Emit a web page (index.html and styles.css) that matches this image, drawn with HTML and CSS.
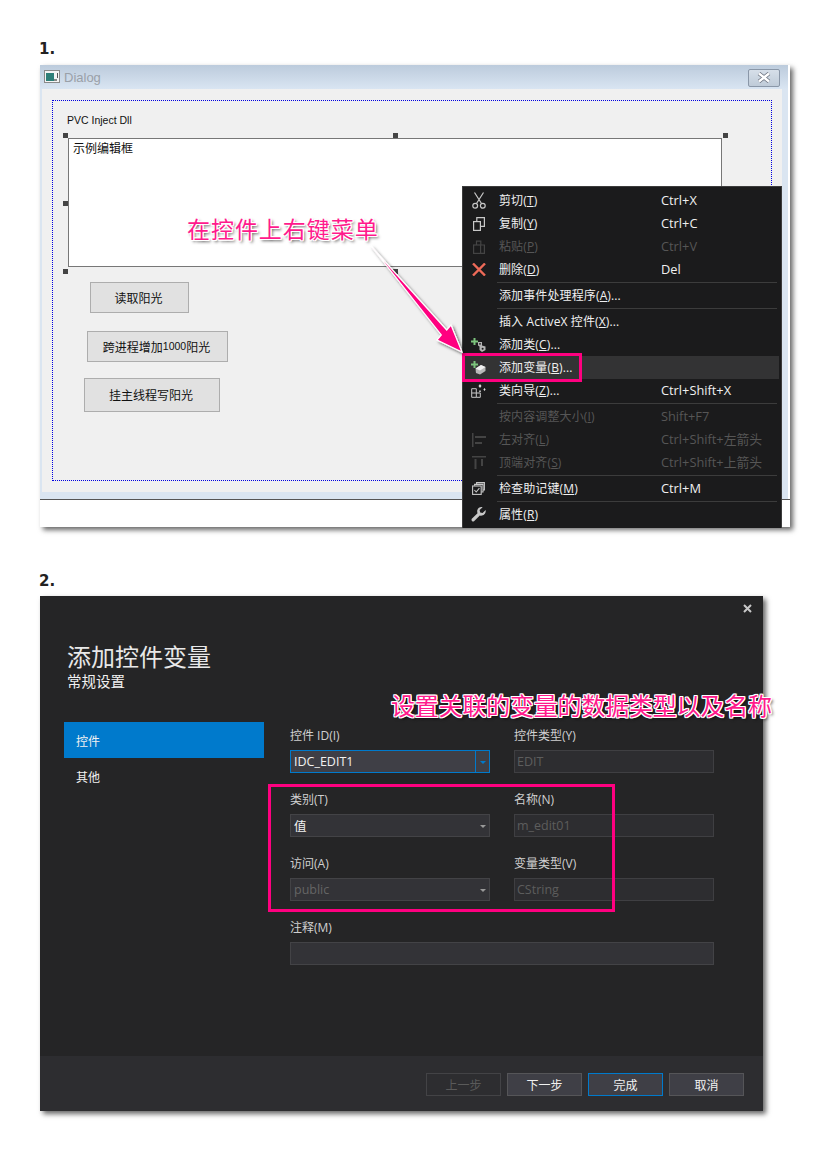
FILE: index.html
```html
<!DOCTYPE html>
<html lang="zh-CN">
<head>
    <meta charset="UTF-8">
    <title>添加控件变量</title>
    <link rel="stylesheet" href="styles.css">
</head>
<body>
    <div class="step-title step-one">1.</div>

    <div class="shot-one">
        <div class="win-title">
            <svg class="win-icon" width="16" height="14" viewBox="0 0 16 14">
                <rect x="0.5" y="0.5" width="15" height="12" fill="#f4f4f4" stroke="#8a8a8a"/>
                <rect x="2" y="3" width="8" height="8" fill="#2f7f78"/>
                <rect x="10" y="9" width="3" height="2" fill="#888"/>
                <rect x="13" y="3" width="1" height="5" fill="#555"/>
            </svg>
            <span class="win-name">Dialog</span>
            <div class="win-close">
                <svg width="14" height="11" viewBox="0 0 14 11">
                    <path d="M2 1.5 L12 9.5 M12 1.5 L2 9.5" stroke="#6d7480" stroke-width="4" fill="none"/>
                    <path d="M2 1.5 L12 9.5 M12 1.5 L2 9.5" stroke="#fff" stroke-width="2.4" fill="none"/>
                </svg>
            </div>
        </div>
        <div class="win-body">
            <div class="guide"></div>
            <div class="static-label">PVC Inject Dll</div>
            <div class="edit-box">示例编辑框</div>
            <i class="handle h-tl"></i>
            <i class="handle h-tm"></i>
            <i class="handle h-tr"></i>
            <i class="handle h-ml"></i>
            <i class="handle h-bl"></i>
            <i class="handle h-bm"></i>
            <div class="dlg-btn btn-read">读取阳光</div>
            <div class="dlg-btn btn-cross">跨进程增加<span class="small-num">1000</span>阳光</div>
            <div class="dlg-btn btn-hook">挂主线程写阳光</div>
        </div>
        <div class="win-foot"></div>
    </div>

    <div class="ctx-menu">
        <div class="ctx-row">
            <span class="ctx-icon">
                <svg width="14" height="17" viewBox="0 0 14 17" fill="none" stroke="#c8c8c8" stroke-width="1.2">
                    <path d="M2.5 0.5 L9.5 11.5 M11.5 0.5 L4.5 11.5"/>
                    <circle cx="3.2" cy="13.8" r="2.4"/>
                    <circle cx="10.8" cy="13.8" r="2.4"/>
                </svg>
            </span>
            <span class="ctx-text">剪切(<u>T</u>)</span><span class="ctx-key">Ctrl+X</span>
        </div>
        <div class="ctx-row">
            <span class="ctx-icon">
                <svg width="12" height="14" viewBox="0 0 12 14" fill="none" stroke="#c8c8c8" stroke-width="1.2">
                    <rect x="0.6" y="4.6" width="6.8" height="8.8"/>
                    <path d="M3.8 4.5 V0.6 H11.4 V9.4 H7.6"/>
                </svg>
            </span>
            <span class="ctx-text">复制(<u>Y</u>)</span><span class="ctx-key">Ctrl+C</span>
        </div>
        <div class="ctx-row off">
            <span class="ctx-icon">
                <svg width="12" height="14" viewBox="0 0 12 14" fill="none" stroke="#444" stroke-width="1.2">
                    <rect x="0.6" y="5" width="7" height="8.4"/>
                    <path d="M7.6 5 H11.4 V13.4 H7.6 M3.5 5 V1.2 H7.8 V5"/>
                </svg>
            </span>
            <span class="ctx-text">粘贴(<u>P</u>)</span><span class="ctx-key">Ctrl+V</span>
        </div>
        <div class="ctx-row">
            <span class="ctx-icon">
                <svg width="14" height="13" viewBox="0 0 14 13">
                    <path d="M1 0.5 L13 12.5 M13 0.5 L1 12.5" stroke="#ee6a58" stroke-width="2.4" fill="none"/>
                </svg>
            </span>
            <span class="ctx-text">删除(<u>D</u>)</span><span class="ctx-key">Del</span>
        </div>
        <div class="ctx-sep"></div>
        <div class="ctx-row"><span class="ctx-icon"></span><span class="ctx-text">添加事件处理程序(<u>A</u>)...</span></div>
        <div class="ctx-sep"></div>
        <div class="ctx-row"><span class="ctx-icon"></span><span class="ctx-text">插入 ActiveX 控件(<u>X</u>)...</span></div>
        <div class="ctx-row">
            <span class="ctx-icon">
                <svg width="15" height="14" viewBox="0 0 15 14">
                    <path d="M3.5 0 V7 M0 3.5 H7" stroke="#7cc47c" stroke-width="2" fill="none"/>
                    <path d="M7 4 L11 4 L11 7.5 L14.5 8.5 L14.5 12 L11 14 L8.5 12 L8.5 8.5 L7 7.5 Z" fill="#b4b4b4"/>
                    <circle cx="9" cy="5.8" r="0.9" fill="#1b1b1c"/>
                    <circle cx="11.6" cy="10.8" r="1" fill="#1b1b1c"/>
                </svg>
            </span>
            <span class="ctx-text">添加类(<u>C</u>)...</span>
        </div>
        <div class="ctx-row picked">
            <span class="ctx-icon">
                <svg width="15" height="14" viewBox="0 0 15 14">
                    <path d="M3.5 0 V7 M0 3.5 H7" stroke="#7cc47c" stroke-width="2" fill="none"/>
                    <path d="M4.5 7.5 L10 4 L14.5 6 V10 L9 13.5 L5 12 Z" fill="#b8b8b8"/>
                    <path d="M4.5 7.5 L10 4 L14.5 6 L9 9.5 Z" fill="#f0f0f0"/>
                </svg>
            </span>
            <span class="ctx-text">添加变量(<u>B</u>)...</span>
        </div>
        <div class="ctx-row">
            <span class="ctx-icon">
                <svg width="15" height="14" viewBox="0 0 15 14">
                    <path d="M0.7 4.7 H5.3 V13.3 H0.7 Z M0.7 9 H5.3 M5.3 9 H9.3 V13.3 H5.3" stroke="#c8c8c8" fill="none"/>
                    <path d="M9 0 L10.5 2 L9 4 L7.5 2 Z M13.5 4 L14.6 5.5 L13.5 7 L12.4 5.5 Z M9 6 L10 7.3 L9 8.6 L8 7.3 Z" fill="#ddd"/>
                </svg>
            </span>
            <span class="ctx-text">类向导(<u>Z</u>)...</span><span class="ctx-key">Ctrl+Shift+X</span>
        </div>
        <div class="ctx-sep"></div>
        <div class="ctx-row off"><span class="ctx-icon"></span><span class="ctx-text">按内容调整大小(<u>I</u>)</span><span class="ctx-key">Shift+F7</span></div>
        <div class="ctx-row off">
            <span class="ctx-icon">
                <svg width="14" height="14" viewBox="0 0 14 14" fill="#444">
                    <rect x="0" y="0" width="1.5" height="14"/>
                    <rect x="3" y="3" width="11" height="2"/>
                    <rect x="3" y="9" width="7" height="2"/>
                </svg>
            </span>
            <span class="ctx-text">左对齐(<u>L</u>)</span><span class="ctx-key">Ctrl+Shift+左箭头</span>
        </div>
        <div class="ctx-row off">
            <span class="ctx-icon">
                <svg width="14" height="13" viewBox="0 0 14 13" fill="#444">
                    <rect x="0" y="0" width="14" height="1.5"/>
                    <rect x="2.5" y="3" width="2" height="10"/>
                    <rect x="9" y="3" width="2" height="7"/>
                </svg>
            </span>
            <span class="ctx-text">顶端对齐(<u>S</u>)</span><span class="ctx-key">Ctrl+Shift+上箭头</span>
        </div>
        <div class="ctx-sep"></div>
        <div class="ctx-row">
            <span class="ctx-icon">
                <svg width="13" height="13" viewBox="0 0 13 13" fill="none" stroke="#c8c8c8" stroke-width="1.1">
                    <rect x="0.6" y="4" width="8.6" height="8.4"/>
                    <path d="M2.6 3.8 V2.4 H11 V10 H9.4 M4.6 2.2 V0.6 H12.4 V8 H11.2"/>
                    <path d="M2.4 8 L4.2 10 L7.4 6.2"/>
                </svg>
            </span>
            <span class="ctx-text">检查助记键(<u>M</u>)</span><span class="ctx-key">Ctrl+M</span>
        </div>
        <div class="ctx-sep"></div>
        <div class="ctx-row">
            <span class="ctx-icon">
                <svg width="15" height="15" viewBox="0 0 15 15">
                    <path d="M14.6 3 L11.6 6 L9.2 5.4 L8.6 3 L11.6 0.2 C9 -0.6 6 1.4 6.2 4.6 C6.2 5.2 6.3 5.6 6.5 6.2 L0.8 11.8 C-0.2 13 1.6 15.4 3 14.2 L8.8 8.6 C12.2 9.6 15.4 6.6 14.6 3 Z" fill="#c8c8c8"/>
                </svg>
            </span>
            <span class="ctx-text">属性(<u>R</u>)</span>
        </div>
    </div>

    <div class="pick-frame"></div>
    <svg class="note-arrow" width="110" height="140" viewBox="0 0 110 140">
        <defs>
            <filter id="arrow-shadow" x="-20%" y="-20%" width="150%" height="150%">
                <feDropShadow dx="2" dy="2" stdDeviation="1.5" flood-color="#000" flood-opacity="0.55"/>
            </filter>
        </defs>
        <path d="M2 1 L77.7 85 L82 80 L93 107 L68 95 L72.3 90 Z" fill="#ff0080" stroke="#fff" stroke-width="1.2" stroke-linejoin="miter" filter="url(#arrow-shadow)"/>
    </svg>
    <div class="note note-one">在控件上右键菜单</div>

    <div class="step-title step-two">2.</div>

    <div class="shot-two">
        <svg class="vs-close" width="9" height="9" viewBox="0 0 9 9">
            <path d="M1 1 L8 8 M8 1 L1 8" stroke="#c8c8c8" stroke-width="2" fill="none"/>
        </svg>
        <div class="vs-main">
            <h1 class="vs-title">添加控件变量</h1>
            <div class="vs-sub">常规设置</div>
            <div class="vs-cols">
                <div class="vs-side">
                    <div class="vs-tab on">控件</div>
                    <div class="vs-tab">其他</div>
                </div>
                <div class="vs-form">
                    <div class="field">
                        <label>控件 ID(I)</label>
                        <div class="combo focus"><span class="val">IDC_EDIT1</span><span class="drop"><b class="tri blue"></b></span></div>
                    </div>
                    <div class="field">
                        <label>控件类型(Y)</label>
                        <div class="combo dim"><span class="val">EDIT</span></div>
                    </div>
                    <div class="field">
                        <label>类别(T)</label>
                        <div class="combo"><span class="val">值</span><span class="drop"><b class="tri"></b></span></div>
                    </div>
                    <div class="field">
                        <label>名称(N)</label>
                        <div class="combo dim"><span class="val">m_edit01</span></div>
                    </div>
                    <div class="field">
                        <label>访问(A)</label>
                        <div class="combo grey"><span class="val">public</span><span class="drop"><b class="tri"></b></span></div>
                    </div>
                    <div class="field">
                        <label>变量类型(V)</label>
                        <div class="combo dim"><span class="val">CString</span></div>
                    </div>
                    <div class="field wide">
                        <label>注释(M)</label>
                        <div class="combo note-box"></div>
                    </div>
                </div>
            </div>
        </div>
        <div class="vs-foot">
            <div class="vs-btn off">上一步</div>
            <div class="vs-btn">下一步</div>
            <div class="vs-btn main">完成</div>
            <div class="vs-btn">取消</div>
        </div>
        <div class="group-frame"></div>
        <div class="note note-two">设置关联的变量的数据类型以及名称</div>
    </div>
</body>
</html>
```

FILE: styles.css
```css
body {
    margin: 0;
    width: 832px;
    height: 1152px;
    position: relative;
    overflow: hidden;
    background: #fff;
    font-family: "Noto Sans CJK SC", "Open Sans", sans-serif;
}

.step-title {
    position: absolute;
    left: 39px;
    font-family: "DejaVu Sans", sans-serif;
    font-weight: bold;
    font-size: 15px;
    line-height: 18px;
    color: #222;
}
.step-one { top: 40px; }
.step-two { top: 572px; }

/* first screenshot */
.shot-one {
    position: absolute;
    left: 40px;
    top: 65px;
    width: 750px;
    height: 462px;
    box-sizing: border-box;
    display: flex;
    flex-direction: column;
    border-right: 2px solid #fff;
    background: #dae5f1;
    box-shadow: 3px 3px 5px rgba(0, 0, 0, 0.6);
}

.win-title {
    height: 24px;
    display: flex;
    align-items: center;
    padding: 0 8px 0 4px;
    background: linear-gradient(#bccbdc, #d9e5f2);
}
.win-icon { margin-right: 4px; }
.win-name {
    flex: 1;
    font-family: "Liberation Sans", sans-serif;
    font-size: 13px;
    color: #9aa0a8;
}
.win-close {
    width: 30px;
    height: 16px;
    margin-top: 1px;
    display: flex;
    align-items: center;
    justify-content: center;
    border: 1px solid #8a97a8;
    border-radius: 2px;
    background: linear-gradient(#d6dfe9, #bfcbd8);
}

.win-body {
    position: relative;
    height: 403px;
    margin: 0 6px 0 2px;
    background: #f0f0f0;
    border-bottom: 7px solid #dae5f1;
}

.win-foot {
    flex: 1;
    margin-right: -2px;
    border-top: 1px solid #555;
    background: #fff;
}

/* controls sit on the dialog editor's canvas */
.guide {
    position: absolute;
    left: 10px;
    top: 11px;
    width: 718px;
    height: 379px;
    border: 1px dotted #0000e0;
}
.static-label {
    position: absolute;
    left: 25px;
    top: 23px;
    font-family: "Liberation Sans", sans-serif;
    font-size: 10.5px;
    line-height: 16px;
    color: #111;
}
.edit-box {
    position: absolute;
    left: 26px;
    top: 49px;
    width: 648px;
    height: 127px;
    padding-left: 4px;
    border: 1px solid #777;
    background: #fff;
    font-size: 12px;
    line-height: 18px;
    color: #111;
}
.handle {
    position: absolute;
    width: 5px;
    height: 5px;
    background: #444;
}
.h-tl { left: 21px; top: 44px; }
.h-tm { left: 351px; top: 44px; }
.h-tr { left: 681px; top: 44px; }
.h-ml { left: 21px; top: 112px; }
.h-bl { left: 21px; top: 180px; }
.h-bm { left: 351px; top: 180px; }

.dlg-btn {
    position: absolute;
    display: flex;
    align-items: center;
    justify-content: center;
    box-sizing: border-box;
    padding: 0 2px 1px 0;
    border: 1px solid #adadad;
    background: #e1e1e1;
    font-size: 12px;
    color: #111;
}
.btn-read { left: 48px; top: 193px; width: 99px; height: 31px; }
.btn-cross { left: 45px; top: 242px; width: 141px; height: 31px; }
.btn-hook { left: 42px; top: 289px; width: 136px; height: 34px; }
.small-num {
    font-family: "Liberation Sans", sans-serif;
    font-size: 10.5px;
}

/* context menu */
.ctx-menu {
    position: absolute;
    left: 462px;
    top: 186px;
    width: 320px;
    height: 342px;
    box-sizing: border-box;
    padding: 2px 2px 0;
    border: 1px solid #3c3c3c;
    border-bottom: 0;
    background: #1b1b1c;
}
.ctx-row {
    height: 23px;
    display: flex;
    align-items: center;
    font-size: 12px;
    color: #f0f0f0;
}
.ctx-row.off { color: #565656; }
.ctx-row.picked { background: #333334; }
.ctx-icon {
    width: 34px;
    height: 23px;
    flex: none;
    display: flex;
    align-items: center;
    justify-content: center;
    padding-right: 7px;
    box-sizing: border-box;
}
.ctx-text {
    width: 162px;
    flex: none;
    padding-bottom: 2px;
    white-space: nowrap;
    letter-spacing: 0.12px;
    font-family: "Open Sans", "Noto Sans CJK SC", sans-serif;
}
.ctx-key {
    padding-bottom: 2px;
    font-family: "Open Sans", "Noto Sans CJK SC", sans-serif;
    font-size: 12.8px;
    white-space: nowrap;
}
.ctx-sep {
    height: 1px;
    margin: 1px 2px 1px 32px;
    background: #3c3c3c;
}

.pick-frame {
    position: absolute;
    left: 462px;
    top: 353px;
    width: 114px;
    height: 23px;
    border: 3px solid #ff0080;
}

/* annotations */
.note {
    position: absolute;
    white-space: nowrap;
    font-family: "Noto Sans CJK SC", sans-serif;
    color: #ff1a8c;
    text-shadow:
        -1px 0 0 #fff, 1px 0 0 #fff, 0 -1px 0 #fff, 0 1px 0 #fff,
        -1px -1px 0 #fff, 1px -1px 0 #fff, -1px 1px 0 #fff, 1px 1px 0 #fff,
        2px 2px 3px rgba(0, 0, 0, 0.7);
}
.note-one {
    left: 187px;
    top: 213px;
    font-size: 23px;
    line-height: 30px;
    letter-spacing: 0.95px;
}
.note-two {
    left: 351px;
    top: 94px;
    font-size: 24px;
    line-height: 30px;
    letter-spacing: -0.2px;
}
.note-arrow {
    position: absolute;
    left: 369px;
    top: 245px;
    overflow: visible;
}

/* second screenshot */
.shot-two {
    position: absolute;
    left: 40px;
    top: 596px;
    width: 723px;
    height: 515px;
    display: flex;
    flex-direction: column;
    background: #252526;
    box-shadow: 3px 3px 5px rgba(0, 0, 0, 0.6);
}
.vs-close {
    position: absolute;
    right: 11px;
    top: 8px;
}
.vs-main {
    flex: 1;
    padding: 47px 0 0 27px;
    color: #f1f1f1;
}
.vs-title {
    margin: 0;
    font-family: "Liberation Sans", "Noto Sans CJK SC", sans-serif;
    font-size: 24px;
    font-weight: normal;
    line-height: 30px;
    color: #e8e8e8;
}
.vs-sub {
    font-family: "Liberation Sans", "Noto Sans CJK SC", sans-serif;
    font-size: 14.5px;
    line-height: 18px;
}
.vs-cols {
    display: flex;
    margin-top: 31px;
    margin-left: -3px;
}
.vs-side {
    width: 200px;
    flex: none;
}
.vs-tab {
    height: 36px;
    padding-left: 12px;
    display: flex;
    align-items: center;
    font-size: 12px;
    color: #f1f1f1;
}
.vs-tab.on { background: #007acc; }
.vs-form {
    margin-left: 26px;
    width: 424px;
    display: grid;
    grid-template-columns: 200px 200px;
    column-gap: 24px;
    row-gap: 13px;
}
.field.wide { grid-column: 1 / 3; }
.field label {
    display: block;
    height: 28px;
    line-height: 27px;
    font-family: "Open Sans", "Noto Sans CJK SC", sans-serif;
    font-size: 12px;
    color: #d0d0d0;
}
.combo {
    height: 23px;
    box-sizing: border-box;
    display: flex;
    align-items: center;
    border: 1px solid #434346;
    background: #333337;
    font-family: "Open Sans", "Noto Sans CJK SC", sans-serif;
    font-size: 12.5px;
    color: #f1f1f1;
}
.combo .val { flex: 1; padding-left: 3px; }
.combo.focus { border-color: #007acc; background: #3f3f46; }
.combo.dim { background: #2d2d30; border-color: #3f3f42; color: #5d5d5d; }
.combo.dim .val { padding-left: 2px; }
.combo.grey { color: #656565; }
.drop {
    width: 13px;
    height: 100%;
    display: flex;
    align-items: center;
    justify-content: center;
}
.combo.focus .drop { border-left: 1px solid #007acc; }
.tri {
    width: 0;
    height: 0;
    margin-top: 1px;
    border-left: 3px solid transparent;
    border-right: 3px solid transparent;
    border-top: 3px solid #999;
}
.tri.blue { border-top-color: #007acc; }

.vs-foot {
    height: 55px;
    box-sizing: border-box;
    display: flex;
    justify-content: flex-end;
    align-items: flex-start;
    gap: 6px;
    padding: 17px 19px 0 0;
    background: #2d2d30;
}
.vs-btn {
    width: 75px;
    height: 23px;
    box-sizing: border-box;
    display: flex;
    align-items: center;
    justify-content: center;
    border: 1px solid #555558;
    background: #3f3f46;
    font-size: 12px;
    color: #f1f1f1;
}
.vs-btn.off { background: #2d2d30; border-color: #434346; color: #5a5a5a; }
.vs-btn.main { border-color: #007acc; }

.group-frame {
    position: absolute;
    left: 228px;
    top: 188px;
    width: 341px;
    height: 122px;
    border: 3px solid #ff0080;
}
```
